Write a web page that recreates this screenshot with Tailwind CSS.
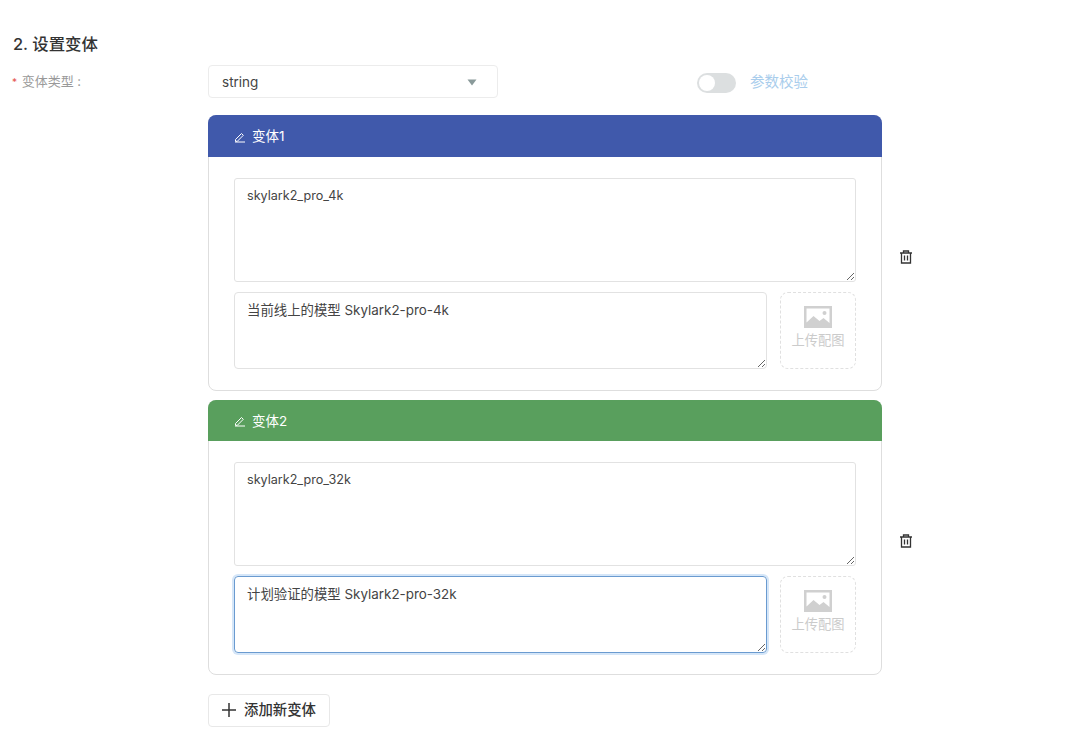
<!DOCTYPE html>
<html lang="zh">
<head>
    <meta charset="UTF-8">
    <title>设置变体</title>
    <script src="https://cdn.jsdelivr.net/npm/@tailwindcss/browser@4"></script>
</head>
<body class="bg-white h-[740px] overflow-hidden font-['Inter','Noto_Sans_CJK_SC',sans-serif] text-[#333]">
    <h2 class="pl-[13px] pt-[34px] h-[65px] text-[16.4px] leading-[20px] font-medium text-[#333]">2. 设置变体</h2>

    <div class="flex">
        <!-- label column -->
        <div class="w-[208px] pl-[12px] pt-[7px] text-[13px] leading-[18px] text-[#999]">
            <span class="text-[10px] mr-[1px] text-[#e5534b]">*</span> 变体类型 :
        </div>

        <div class="w-[720px]">
            <div class="flex items-center h-[33px]">
                <div class="w-[290px] h-[33px] flex items-center justify-between pl-[13px] pr-[20px] pt-px border border-[#ececec] rounded-[4px] text-[13.5px] text-[#444]">
                    <span>string</span>
                    <svg class="w-[10px] h-[7px]" viewBox="0 0 10 7"><path d="M0.5 0.5h9L5 6.5z" fill="#8a9a9a"/></svg>
                </div>
                <div class="ml-[199px] w-[39px] h-[20px] mt-[2px] rounded-full bg-[#dcdfe0] p-[2px]">
                    <div class="w-[16px] h-[16px] rounded-full bg-white"></div>
                </div>
                <span class="ml-[14px] text-[14.5px] text-[#a9cdec]">参数校验</span>
            </div>

            <!-- variant 1 -->
            <div class="flex items-start mt-[17px]">
                <div class="w-[674px] h-[276px] border border-[#dedede] rounded-[8px]">
                    <div class="h-[42px] -mx-px -mt-px rounded-t-[8px] bg-[#4059ab] flex items-center pl-[26px] pt-px text-[13.5px] text-white">
                        <svg class="w-[12px] h-[12px] mr-[6px]" viewBox="0 0 12 12" fill="none" stroke="#fff" stroke-width="1"><path d="M1.5 8.5 7.5 2.5 9.3 4.3 3.3 10.3H1.5zM1 11h10"/></svg>
                        变体1
                    </div>
                    <div class="px-[25px] pt-[21px]">
                        <textarea class="block w-full h-[104px] border border-[#e2e2e2] rounded-[3px] px-[12px] py-[7px] text-[12.6px] leading-[19px] text-[#444] outline-none">skylark2_pro_4k</textarea>
                        <div class="flex gap-[13px] mt-[10px]">
                            <textarea class="block flex-1 h-[77px] border border-[#e2e2e2] rounded-[4px] px-[12px] py-[7px] text-[13.4px] leading-[20px] text-[#444] outline-none">当前线上的模型 Skylark2-pro-4k</textarea>
                            <div class="w-[76px] h-[77px] border border-dashed border-[#e0e0e0] rounded-[8px] flex flex-col items-center pt-[13px]">
                                <svg class="w-[28px] h-[22px]" viewBox="0 0 28 22"><path fill="#d0d0d0" fill-rule="evenodd" d="M0 0h28v22H0zM2.5 2.5v14l7-6.5 6 5 4-3 6 5V2.5zM20.5 5a2 2 0 1 1 0 4 2 2 0 0 1 0-4z"/></svg>
                                <span class="mt-[3px] text-[13.3px] leading-[18px] text-[#cbcbcb]">上传配图</span>
                            </div>
                        </div>
                    </div>
                </div>
                <svg class="w-[14px] h-[14px] ml-[17px] mt-[135px]" viewBox="0 0 14 14" fill="none" stroke="#333" stroke-width="1.3"><path d="M1 3h12M4.5 3V1h5v2M2.5 3v10h9V3M5.5 5.5v5M8.5 5.5v5"/></svg>
            </div>

            <!-- variant 2 -->
            <div class="flex items-start mt-[9px]">
                <div class="w-[674px] h-[275px] border border-[#dedede] rounded-[8px]">
                    <div class="h-[41px] -mx-px -mt-px rounded-t-[8px] bg-[#599f5d] flex items-center pl-[26px] pt-px text-[13.5px] text-white">
                        <svg class="w-[12px] h-[12px] mr-[6px]" viewBox="0 0 12 12" fill="none" stroke="#fff" stroke-width="1"><path d="M1.5 8.5 7.5 2.5 9.3 4.3 3.3 10.3H1.5zM1 11h10"/></svg>
                        变体2
                    </div>
                    <div class="px-[25px] pt-[21px]">
                        <textarea class="block w-full h-[104px] border border-[#e2e2e2] rounded-[3px] px-[12px] py-[7px] text-[12.6px] leading-[19px] text-[#444] outline-none">skylark2_pro_32k</textarea>
                        <div class="flex gap-[13px] mt-[10px]">
                            <textarea class="block flex-1 h-[77px] border border-[#6a9bd0] rounded-[4px] px-[12px] py-[7px] text-[13.4px] leading-[20px] text-[#444] outline-none shadow-[0_0_0_2px_#d5e6f8]">计划验证的模型 Skylark2-pro-32k</textarea>
                            <div class="w-[76px] h-[77px] border border-dashed border-[#e0e0e0] rounded-[8px] flex flex-col items-center pt-[13px]">
                                <svg class="w-[28px] h-[22px]" viewBox="0 0 28 22"><path fill="#d0d0d0" fill-rule="evenodd" d="M0 0h28v22H0zM2.5 2.5v14l7-6.5 6 5 4-3 6 5V2.5zM20.5 5a2 2 0 1 1 0 4 2 2 0 0 1 0-4z"/></svg>
                                <span class="mt-[3px] text-[13.3px] leading-[18px] text-[#cbcbcb]">上传配图</span>
                            </div>
                        </div>
                    </div>
                </div>
                <svg class="w-[14px] h-[14px] ml-[17px] mt-[134px]" viewBox="0 0 14 14" fill="none" stroke="#333" stroke-width="1.3"><path d="M1 3h12M4.5 3V1h5v2M2.5 3v10h9V3M5.5 5.5v5M8.5 5.5v5"/></svg>
            </div>

            <button class="mt-[19px] w-[122px] h-[33px] flex items-center pl-[13px] pb-px border border-[#e8e8e8] rounded-[4px] text-[14.4px] font-medium text-[#333]">
                <svg class="w-[14px] h-[14px] mr-[8px]" viewBox="0 0 14 14" stroke="#333" stroke-width="1.5"><path d="M7 0v14M0 7h14"/></svg>
                添加新变体
            </button>
        </div>
    </div>
</body>
</html>
